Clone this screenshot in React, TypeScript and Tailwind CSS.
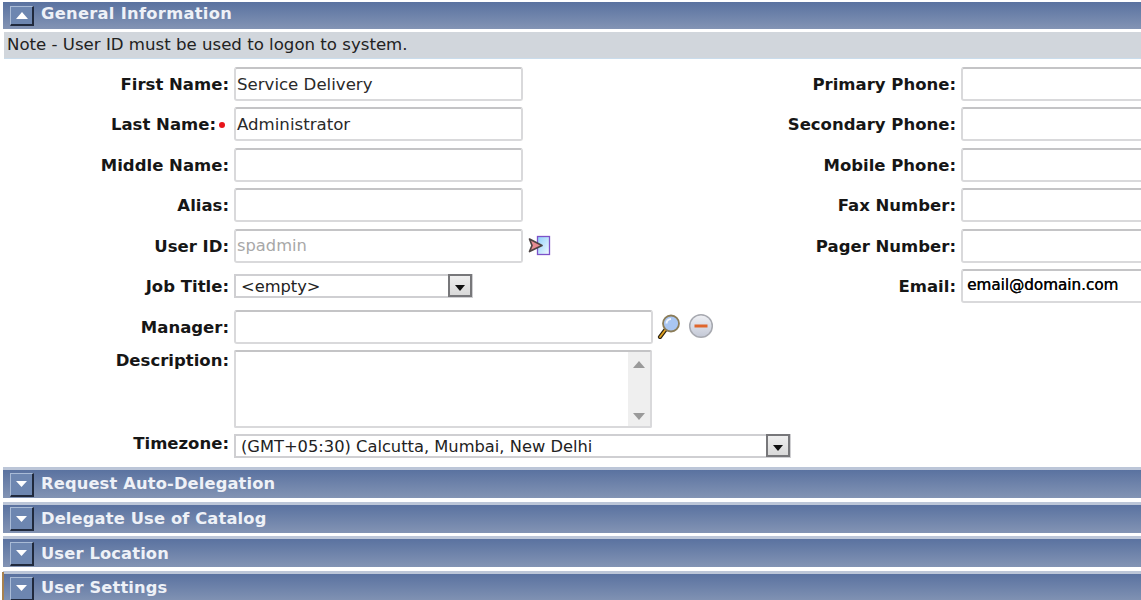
import type { ReactNode } from 'react';

const font = "font-['DejaVu_Sans',Verdana,sans-serif]";
const labelText = 'text-[16.5px] font-bold text-[#161616]';

function SectionBar({ title, open }: { title: string; open?: boolean }) {
  return (
    <div
      className={`flex items-center ml-[3px] bg-gradient-to-b from-[#5a72a0] to-[#8394b4] ${
        open ? 'h-[27px] pb-[3px]' : 'h-[31px] border-t-[3px] border-[#bcc6d8] pt-[1px]'
      }`}
    >
      <div
        className={`ml-[7px] w-[24px] flex items-center justify-center bg-[#6d86b0] border border-[#a9bbd6] border-r-2 border-b-2 border-r-[#20293c] border-b-[#20293c] ${
          open ? 'h-[20px] mt-[3px]' : 'h-[24px]'
        }`}
      >
        {open ? (
          <svg width="12" height="7" viewBox="0 0 12 7">
            <path d="M6 0 L12 7 L0 7 Z" fill="#fff" />
          </svg>
        ) : (
          <svg width="11" height="6" viewBox="0 0 11 6">
            <path d="M0 0 L11 0 L5.5 6 Z" fill="#fff" />
          </svg>
        )}
      </div>
      <span className={`ml-[7px] text-[16.3px] font-bold text-[#eef1f7] ${open ? 'tracking-[0.3px]' : 'tracking-[0.15px]'}`}>{title}</span>
    </div>
  );
}

function Row({
  label,
  required,
  children,
  className = '',
  labelWidth = 'w-[225px]',
  labelClass = '',
}: {
  label: string;
  required?: boolean;
  children: ReactNode;
  className?: string;
  labelWidth?: string;
  labelClass?: string;
}) {
  return (
    <div className={`flex h-[34px] ${className}`}>
      <div className={`${labelWidth} ${labelClass} h-[34px] shrink-0 text-right ${labelText} leading-[34px] pt-[1px] relative`}>
        {label}
        {required && <span className="absolute right-[-9px] top-[15px] w-[6px] h-[6px] rounded-full bg-[#e8141a]" />}
      </div>
      <div className="flex items-center ml-[5px]">{children}</div>
    </div>
  );
}

function TextBox({ value, width = 'w-[289px]', muted, dark }: { value?: string; width?: string; muted?: boolean; dark?: boolean }) {
  let tone = 'pl-[1px] pt-[2px] text-[16.6px] text-[#2a2a2a]';
  if (muted) tone = 'pl-[1px] pt-[2px] text-[16.3px] text-[#a8a8a8]';
  if (dark) tone = 'pl-[4px] pb-[1px] text-[15.2px] text-[#050505] [text-shadow:0.4px_0_0_#050505]';
  return (
    <div className={`${width} h-[34px] shrink-0 border-2 border-[#d9d9db] border-t-[#c4c4c6] rounded-[3px] bg-white flex items-center ${tone}`}>
      {value}
    </div>
  );
}

function SelectBox({ value, width }: { value: string; width: string }) {
  return (
    <div className={`${width} h-[24px] shrink-0 border-2 border-[#cfcfd2] bg-white flex items-center justify-between pl-[5px] pt-[3px] text-[16.3px] text-[#222]`}>
      <span>{value}</span>
      <div className="w-[24px] h-[23px] -mr-[1px] -mt-[3px] bg-gradient-to-b from-[#efefef] to-[#d9d9d9] border-2 border-[#77777a] flex items-center justify-center">
        <svg width="10" height="6" viewBox="0 0 10 6" className="mt-[4px]">
          <path d="M0 0 H10 L5 6 Z" fill="#111" />
        </svg>
      </div>
    </div>
  );
}

function TransferIcon() {
  return (
    <svg width="24" height="22" viewBox="0 0 24 22" className="ml-[4px]">
      <defs>
        <linearGradient id="page-bg" x1="0" y1="0" x2="1" y2="1">
          <stop offset="0" stopColor="#8fd0fa" />
          <stop offset="1" stopColor="#f2f9ff" />
        </linearGradient>
      </defs>
      <rect x="10.5" y="1.5" width="12" height="18" fill="url(#page-bg)" stroke="#7d52c8" strokeWidth="1.3" />
      <path d="M2.5 4 L15 10.5 L2.5 16.5 L5 10.5 Z" fill="#e58b92" stroke="#4d4444" strokeWidth="1.7" strokeLinejoin="round" />
    </svg>
  );
}

function SearchIcon() {
  return (
    <svg width="24" height="25" viewBox="0 0 24 25" className="ml-[4px]">
      <path d="M3 23 L9 15" stroke="#2f2410" strokeWidth="4.2" strokeLinecap="round" />
      <path d="M3 23 L9 15" stroke="#e2a21e" strokeWidth="1.8" strokeLinecap="round" />
      <circle cx="14" cy="9.5" r="8" fill="#a9c6f2" stroke="#8b7c58" strokeWidth="1.8" />
      <path d="M9.5 9.5 A4.5 4.5 0 0 1 14 5" fill="none" stroke="#eef4fd" strokeWidth="2" />
    </svg>
  );
}

function RemoveIcon() {
  return (
    <svg width="26" height="26" viewBox="0 0 26 26" className="ml-[7px] -mt-[2px]">
      <defs>
        <linearGradient id="remove-bg" x1="0" y1="0" x2="0" y2="1">
          <stop offset="0" stopColor="#f0f1f5" />
          <stop offset="1" stopColor="#c3c8d6" />
        </linearGradient>
      </defs>
      <circle cx="13" cy="13" r="11.3" fill="url(#remove-bg)" stroke="#a7a9b0" strokeWidth="1.5" />
      <rect x="6.5" y="11.5" width="13" height="3" fill="#e0662c" />
    </svg>
  );
}

function Scrollbar() {
  return (
    <div className="w-[22px] h-full bg-[#efefef] flex flex-col items-center justify-between pt-[9px] pb-[6px]">
      <svg width="12" height="7" viewBox="0 0 12 7"><path d="M6 0 L12 7 H0 Z" fill="#9a9a9a" /></svg>
      <svg width="12" height="7" viewBox="0 0 12 7"><path d="M0 0 H12 L6 7 Z" fill="#9a9a9a" /></svg>
    </div>
  );
}

export default function App() {
  return (
    <div className={`w-[1141px] h-[600px] overflow-hidden bg-white ${font}`}>
      <div className="pt-[2px]">
        <SectionBar title="General Information" open />
      </div>
      <div className="mt-[3px] ml-[4px] h-[27px] bg-[#d1d6dc] border-b border-[#c9dcec] flex items-center pl-[3px] pt-[1px] text-[16.6px] text-[#222]">
        Note - User ID must be used to logon to system.
      </div>

      <div className="flex pt-[8px] h-[408px]">
        {/* left column */}
        <div className="w-[727px] shrink-0 ml-[4px]">
          <div className="flex flex-col gap-[6.4px]">
            <Row label="First Name:"><TextBox value="Service Delivery" /></Row>
            <Row label="Last Name:" required labelWidth="w-[212px] mr-[13px]"><TextBox value="Administrator" /></Row>
            <Row label="Middle Name:"><TextBox /></Row>
            <Row label="Alias:"><TextBox /></Row>
            <Row label="User ID:">
              <TextBox value="spadmin" muted />
              <TransferIcon />
            </Row>
          </div>
          <Row label="Job Title:" className="mt-[11px]" labelClass="-mt-[5px]">
            <div className="self-start"><SelectBox value="<empty>" width="w-[239px]" /></div>
          </Row>
          <Row label="Manager:" className="mt-[2px]">
            <TextBox width="w-[419px]" />
            <SearchIcon />
            <RemoveIcon />
          </Row>
          <div className="flex mt-[6px] h-[78px]">
            <div className={`w-[225px] text-right ${labelText} leading-[20px] pt-[1px]`}>Description:</div>
            <div className="ml-[5px] w-[418px] border-2 border-[#d9d9db] border-t-[#c4c4c6] rounded-[2px] bg-white flex justify-end">
              <Scrollbar />
            </div>
          </div>
          <Row label="Timezone:" className="mt-[6px] !h-[24px]" labelClass="-mt-[8px]">
            <SelectBox value="(GMT+05:30) Calcutta, Mumbai, New Delhi" width="w-[557px]" />
          </Row>
        </div>

        {/* right column */}
        <div className="flex flex-col gap-[6.4px]">
          <Row label="Primary Phone:"><TextBox width="w-[200px]" /></Row>
          <Row label="Secondary Phone:"><TextBox width="w-[200px]" /></Row>
          <Row label="Mobile Phone:"><TextBox width="w-[200px]" /></Row>
          <Row label="Fax Number:"><TextBox width="w-[200px]" /></Row>
          <Row label="Pager Number:"><TextBox width="w-[200px]" /></Row>
          <Row label="Email:"><TextBox width="w-[200px]" value="email@domain.com" dark /></Row>
        </div>
      </div>

      <div className="flex flex-col gap-[3.7px]">
        <SectionBar title="Request Auto-Delegation" />
        <SectionBar title="Delegate Use of Catalog" />
        <SectionBar title="User Location" />
        <div className="relative">
          <div className="absolute left-[2px] top-[1px] w-[2px] h-[30px] bg-[#a8814e]" />
          <SectionBar title="User Settings" />
        </div>
      </div>
    </div>
  );
}
